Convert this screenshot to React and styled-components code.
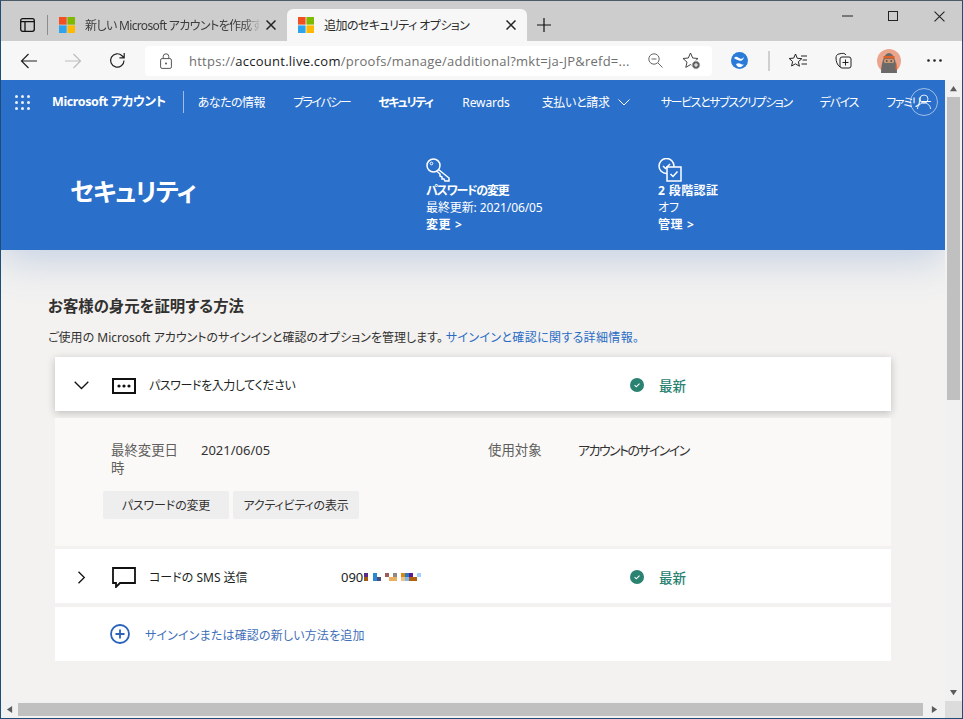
import React from 'react'
import styled, { createGlobalStyle } from 'styled-components'

const GlobalStyle = createGlobalStyle`
  html, body { margin: 0; padding: 0; height: 100%; overflow: hidden; }
  body {
    font-family: "Noto Sans", "Noto Sans CJK JP", sans-serif;
    font-feature-settings: "palt";
    color: #201f1e;
  }
  * { box-sizing: border-box; }
`

const Glyph = styled.svg`
  flex: none;
  display: block;
`

const Frame = styled.div`
  width: 963px;
  height: 719px;
  display: flex;
  flex-direction: column;
  border: 1px solid #1d4e79;
  border-top-color: #4a5a68;
  overflow: hidden;
`

const TabStrip = styled.div`
  height: 40px;
  flex: none;
  background: #cdcdcd;
  display: flex;
  align-items: flex-end;
  padding-left: 7px;
`

const TabToggle = styled.div`
  width: 40px;
  height: 20px;
  margin-bottom: 6px;
  display: flex;
  align-items: center;
  justify-content: center;
  border-right: 1px solid #8d8d8d;
`

const Tab = styled.div`
  width: ${p => p.$width}px;
  height: 32px;
  flex: none;
  display: flex;
  align-items: center;
  padding: 0 11px;
  gap: 10px;
  font-size: 12px;
  border-radius: 6px 6px 0 0;
  background: ${p => (p.$active ? '#f7f7f7' : 'transparent')};
  color: ${p => (p.$active ? '#2a2a2a' : '#3c3c3c')};
`

const TabTitle = styled.span`
  flex: 1;
  min-width: 0;
  margin-right: -5px;
  white-space: nowrap;
  overflow: hidden;
  letter-spacing: ${p => p.$track || 0}px;
  -webkit-mask-image: ${p => (p.$fade ? 'linear-gradient(90deg, #000 90%, transparent)' : 'none')};
  mask-image: ${p => (p.$fade ? 'linear-gradient(90deg, #000 90%, transparent)' : 'none')};
`

const NewTab = styled.div`
  width: 34px;
  height: 32px;
  display: flex;
  align-items: center;
  justify-content: center;
`

const WindowButtons = styled.div`
  margin-left: auto;
  align-self: flex-start;
  display: flex;
  height: 30px;
`

const WindowButton = styled.div`
  width: 46px;
  height: 30px;
  display: flex;
  align-items: center;
  justify-content: center;
`

const Toolbar = styled.div`
  height: 39px;
  flex: none;
  background: #f7f7f7;
  display: flex;
  align-items: center;
  padding-left: 6px;
`

const ToolButton = styled.div`
  width: ${p => p.$width || 44}px;
  height: 32px;
  flex: none;
  display: flex;
  align-items: center;
  justify-content: center;
`

const AddressBar = styled.div`
  width: 567px;
  height: 30px;
  flex: none;
  margin: 0 4px 0 6px;
  background: #fff;
  border-radius: 4px;
  display: flex;
  align-items: center;
  padding-left: 14px;
  font-size: 13px;
`

const Url = styled.div`
  margin-left: 16px;
  width: 448px;
  white-space: nowrap;
  letter-spacing: 0.25px;
  color: #6f6f6f;
  font-family: "Open Sans", sans-serif;
  b { font-weight: 400; color: #1a1a1a; }
`

const AddressAction = styled.div`
  width: 36px;
  height: 30px;
  display: flex;
  align-items: center;
  justify-content: center;
`

const ToolbarDivider = styled.div`
  width: 2px;
  height: 20px;
  background: #cfcfcf;
  flex: none;
  margin: 0 6px;
`

const Viewport = styled.div`
  flex: 1;
  min-height: 0;
  display: flex;
`

const Page = styled.div`
  flex: 1;
  min-width: 0;
  background: #f3f2f1;
  overflow: hidden;
`

const Banner = styled.header`
  background: #2a6fc9;
  color: #fff;
  height: 170px;
  position: relative;
  box-shadow: 0 8px 40px rgba(38, 100, 180, 0.25);
`

const Nav = styled.nav`
  height: 44px;
  display: flex;
  align-items: center;
  padding-left: 14px;
  overflow: hidden;
  white-space: nowrap;
  font-size: 12px;
`

const Brand = styled.div`
  flex: none;
  font-size: 12.5px;
  font-weight: 700;
  letter-spacing: -0.4px;
  margin-left: 22px;
  padding-right: 17px;
  height: 22px;
  line-height: 22px;
  border-right: 1px solid rgba(255, 255, 255, 0.55);
`

const NavItems = styled.div`
  flex: none;
  display: flex;
  align-items: center;
  gap: 28px;
  margin-left: 14px;
`

const NavItem = styled.span`
  display: flex;
  align-items: center;
  gap: 8px;
  flex: none;
  margin-right: ${p => p.$extra || 0}px;
  letter-spacing: ${p => p.$track || 0}px;
  font-weight: ${p => (p.$current ? 700 : 400)};
`

const UserCircle = styled.div`
  position: absolute;
  left: 909px;
  top: 8px;
  width: 28px;
  height: 28px;
  border-radius: 50%;
  border: 1px solid rgba(255, 255, 255, 0.55);
  display: flex;
  align-items: center;
  justify-content: center;
`

const Hero = styled.div`
  height: 126px;
  display: grid;
  grid-template-columns: 356px 232px 1fr;
  padding-left: 69px;
`

const HeroTitle = styled.h1`
  margin: 6px 0 0;
  align-self: center;
  font-size: 25px;
  font-weight: 700;
  letter-spacing: -1px;
`

const HeroBlock = styled.div`
  padding-top: 34px;
  font-size: 12px;
  line-height: 17px;
`

const HeroIcon = styled.div`
  height: 24px;
`

const HeroStrong = styled.div`
  font-weight: 700;
  letter-spacing: ${p => p.$track || 0}px;
`

const HeroText = styled.div`
  letter-spacing: -0.1px;
`

const Content = styled.main`
  padding: 47px 0 0 47px;
`

const Heading = styled.h2`
  margin: 0 0 10px;
  font-size: 15.4px;
  line-height: 20px;
  font-weight: 700;
  color: #323130;
`

const Intro = styled.p`
  margin: 0 0 9px;
  padding-top: 1px;
  font-size: 12px;
  line-height: 20px;
  color: #323130;
`

const InlineLink = styled.a`
  color: #2a6cc4;
  letter-spacing: 0.35px;
`

const List = styled.div`
  margin-left: 7px;
  width: 836px;
  display: flex;
  flex-direction: column;
`

const Row = styled.div`
  height: 54px;
  background: #fff;
  display: grid;
  grid-template-columns: 52px 42px 192px 289px 1fr;
  align-items: center;
  font-size: 12px;
  margin-bottom: ${p => p.$gap || 0}px;
  box-shadow: ${p => (p.$raised ? '0 2px 8px rgba(0, 0, 0, 0.22)' : 'none')};
`

const RowText = styled.span`
  margin-top: 2px;
  letter-spacing: ${p => p.$track || 0}px;
`

const Chevron = styled.div`
  display: flex;
  justify-content: center;
  margin-top: 3px;
`

const RowIcon = styled.div`
  display: flex;
  padding-left: 5px;
  margin-top: 3px;
`

const Status = styled.div`
  display: flex;
  align-items: center;
  gap: 15px;
  margin-top: 2px;
  color: #2a8271;
  font-size: 13.5px;
  font-weight: 500;
`

const Masked = styled.div`
  display: flex;
  align-items: center;
  font-size: 13px;
  margin-top: 2px;
`

const MosaicBlock = styled(Glyph)`
  margin: -1px 0 0 1px;
`

const Detail = styled.div`
  height: 128px;
  background: #faf9f8;
  margin-bottom: 3px;
  padding: 23px 0 0 48px;
  font-size: 12px;
`

const DetailGrid = styled.div`
  display: grid;
  grid-template-columns: 90px 287px 90px 1fr;
  padding-left: 8px;
  line-height: 18px;
  height: 50px;
`

const DetailLabel = styled.div`
  width: 72px;
  font-size: 13.4px;
  color: #605e5c;
`

const DetailValue = styled.div`
  color: #323130;
  font-size: 13px;
  letter-spacing: ${p => p.$track || 0}px;
`

const Actions = styled.div`
  display: flex;
  gap: 4px;
`

const ActionButton = styled.button`
  width: 126px;
  height: 28px;
  border: 0;
  padding: 0;
  background: #eeeeee;
  border-radius: 2px;
  font: inherit;
  letter-spacing: -0.15px;
  color: #323130;
`

const AddRow = styled.div`
  height: 54px;
  background: #fff;
  display: flex;
  align-items: center;
  gap: 15px;
  padding-left: 55px;
  font-size: 12px;
  color: #3f6fb8;
`

const VScroll = styled.div`
  width: 17px;
  flex: none;
  background: #f1f1f1;
  display: flex;
  flex-direction: column;
  align-items: center;
`

const ScrollEnd = styled.div`
  height: 17px;
  width: ${p => p.$width || 17}px;
  flex: none;
  display: flex;
  align-items: center;
  justify-content: center;
`

const VThumb = styled.div`
  width: 13px;
  height: 303px;
  background: #c0c0c0;
`

const VTrack = styled.div`
  flex: 1;
`

const HScroll = styled.div`
  height: 17px;
  flex: none;
  background: #f1f1f1;
  display: flex;
  align-items: center;
`

const HThumb = styled.div`
  height: 13px;
  width: 905px;
  background: #c0c0c0;
`

const Corner = styled.div`
  width: 17px;
  height: 17px;
  background: #dcdcdc;
  margin-left: auto;
`

const FlipArrow = styled(Glyph)`
  transform: ${p => (p.$flip ? 'scaleX(-1)' : 'none')};
`

const MsLogo = () => (
  <Glyph width="16" height="16" viewBox="0 0 16 16">
    <rect width="7.6" height="7.6" fill="#f25022" />
    <rect x="8.4" width="7.6" height="7.6" fill="#7fba00" />
    <rect y="8.4" width="7.6" height="7.6" fill="#2ea4ef" />
    <rect x="8.4" y="8.4" width="7.6" height="7.6" fill="#ffb900" />
  </Glyph>
)

const CloseIcon = ({ size = 10, width = 1.5, color = '#222' }) => (
  <Glyph width={size} height={size} viewBox="0 0 10 10">
    <path d="M.5.5l9 9M9.5.5l-9 9" stroke={color} strokeWidth={width} fill="none" />
  </Glyph>
)

const Arrow = ({ color, flip }) => (
  <FlipArrow $flip={flip} width="18" height="16" viewBox="0 0 18 16">
    <path d="M17 8H1.5M8.5 1L1.5 8l7 7" stroke={color} strokeWidth="1.2" fill="none" />
  </FlipArrow>
)

const Dots = () => (
  <svg width="15" height="3" viewBox="0 0 15 3">
    <circle cx="1.5" cy="1.5" r="1.3" fill="#222" />
    <circle cx="7.5" cy="1.5" r="1.3" fill="#222" />
    <circle cx="13.5" cy="1.5" r="1.3" fill="#222" />
  </svg>
)

const Waffle = () => (
  <Glyph width="15" height="15" viewBox="0 0 15 15" fill="#fff" opacity="0.9">
    {[1.5, 7.5, 13.5].map(y => [1.5, 7.5, 13.5].map(x => <circle key={`${x}-${y}`} cx={x} cy={y} r="1.5" />))}
  </Glyph>
)

const CheckBadge = () => (
  <Glyph width="14" height="14" viewBox="0 0 14 14">
    <circle cx="7" cy="7" r="7" fill="#2a8271" />
    <path d="M4.6 7.2l1.7 1.6 3.2-3.2" stroke="#fff" strokeWidth="1.1" fill="none" />
  </Glyph>
)

const Caret = ({ d }) => (
  <svg width="7" height="7" viewBox="0 0 8 8">
    <path d={d} fill="#5c5c5c" />
  </svg>
)

// モザイク処理された電話番号
const mosaic = [
  [0, 0, '#5b2a86'], [0, 4, '#a05a14'],
  [9, 0, '#2a88d0'], [9, 4, '#2a88d0'], [13, 4, '#4a4a80'],
  [21, 0, '#a05a5a'], [29, 0, '#8a8a80'], [25, 4, '#e8b060'], [29, 4, '#e8b060'],
  [37, 0, '#d88a10'], [41, 0, '#2a7ac0'], [45, 0, '#5a1a90'], [53, 0, '#a0d0ff'],
  [37, 4, '#f0c080'], [41, 4, '#80b8f0'], [45, 4, '#b06010'], [49, 4, '#b06010'],
]

const Mosaic = () => (
  <MosaicBlock width="57" height="8" viewBox="0 0 57 8">
    {mosaic.map(([x, y, c]) => <rect key={`${x}-${y}`} x={x} y={y} width="4" height="4" fill={c} />)}
  </MosaicBlock>
)

const navHead = [
  { label: 'あなたの情報', track: -0.5 },
  { label: 'プライバシー', track: -1.5 },
  { label: 'セキュリティ', track: -1.5, extra: 2, current: true },
  { label: 'Rewards', track: -0.1, extra: 4 },
]

const navTail = [
  { label: 'サービスとサブスクリプション', track: -1.4 },
  { label: 'デバイス', track: -1.25 },
  { label: 'ファミリー', track: -1.4 },
]

export default function App() {
  return (
    <>
      <GlobalStyle />
      <Frame>
        <TabStrip>
          <TabToggle>
            <svg width="15" height="14" viewBox="0 0 15 14">
              <rect x=".7" y=".7" width="13.6" height="12.6" rx="2" fill="none" stroke="#111" strokeWidth="1.3" />
              <path d="M1 3.6h13M5 3.6v9.6" stroke="#111" strokeWidth="1.3" fill="none" />
            </svg>
          </TabToggle>
          <Tab $width={239}>
            <MsLogo />
            <TabTitle $fade $track={-0.65}>新しい Microsoft アカウントを作成する</TabTitle>
            <CloseIcon />
          </Tab>
          <Tab $active $width={240}>
            <MsLogo />
            <TabTitle $track={-0.55}>追加のセキュリティ オプション</TabTitle>
            <CloseIcon />
          </Tab>
          <NewTab>
            <svg width="14" height="14" viewBox="0 0 14 14">
              <path d="M7 0v14M0 7h14" stroke="#111" strokeWidth="1.2" />
            </svg>
          </NewTab>
          <WindowButtons>
            <WindowButton>
              <svg width="11" height="2" viewBox="0 0 11 2"><path d="M0 1h11" stroke="#222" /></svg>
            </WindowButton>
            <WindowButton>
              <svg width="10" height="10" viewBox="0 0 10 10"><rect x=".5" y=".5" width="9" height="9" fill="none" stroke="#222" /></svg>
            </WindowButton>
            <WindowButton>
              <CloseIcon size={11} width={1} />
            </WindowButton>
          </WindowButtons>
        </TabStrip>

        <Toolbar>
          <ToolButton><Arrow color="#222" /></ToolButton>
          <ToolButton><Arrow color="#bdbdbd" flip /></ToolButton>
          <ToolButton>
            <svg width="17" height="17" viewBox="0 0 17 17">
              <path d="M15 8.5a6.7 6.7 0 1 1-2-4.8L15 5.6M15.2 1v4.8h-4.8" stroke="#222" strokeWidth="1.2" fill="none" />
            </svg>
          </ToolButton>
          <AddressBar>
            <svg width="14" height="16" viewBox="0 0 14 16">
              <rect x="1.6" y="5.6" width="10.8" height="9.8" rx="1.5" fill="none" stroke="#555" />
              <path d="M4.2 5.6V3.6a2.8 2.8 0 0 1 5.6 0v2" fill="none" stroke="#555" />
              <circle cx="7" cy="10.5" r="1" fill="#555" />
            </svg>
            <Url>https://<b>account.live.com</b>/proofs/manage/additional?mkt=ja-JP&amp;refd=...</Url>
            <AddressAction>
              <svg width="15" height="15" viewBox="0 0 15 15">
                <circle cx="6" cy="6" r="5.2" fill="none" stroke="#666" />
                <path d="M3.5 6h5M10 10l4.5 4.5" stroke="#666" fill="none" />
              </svg>
            </AddressAction>
            <AddressAction>
              <svg width="19" height="18" viewBox="0 0 19 18">
                <path d="M8.5 1l2.2 5 5.3.5-4 3.6 1.2 5.3-4.7-2.8-4.7 2.8 1.2-5.3-4-3.6 5.3-.5z" fill="none" stroke="#444" strokeWidth="1" />
                <circle cx="14" cy="13" r="4.2" fill="#5f5f5f" stroke="#fff" />
                <path d="M14 11v4M12 13h4" stroke="#fff" />
              </svg>
            </AddressAction>
          </AddressBar>
          <ToolButton $width={46}>
            <svg width="17" height="17" viewBox="0 0 17 17">
              <circle cx="8.5" cy="8.5" r="8.5" fill="#2a7ad8" />
              <path d="M3 6c2-2.5 4-1 5 0s3 1.5 5-1c-.5 3-2.5 4.5-5 3.5-2-.8-3-1-5-2.5zM5 12c2-1 3.5-1 5 0s2 1 3 0c-1 2.5-3.5 3.5-5.5 3-1-.3-2-1.5-2.5-3z" fill="#fff" />
            </svg>
          </ToolButton>
          <ToolbarDivider />
          <ToolButton $width={44}>
            <svg width="18" height="16" viewBox="0 0 18 16">
              <path d="M6.5 1l1.8 4.3 4.5.4-3.4 3 1 4.5-3.9-2.4L2.6 13l1-4.5-3.4-3 4.5-.4z" fill="none" stroke="#222" />
              <path d="M12 3h6M13.5 7H18M12.5 11H18" stroke="#222" />
            </svg>
          </ToolButton>
          <ToolButton $width={47}>
            <svg width="17" height="17" viewBox="0 0 17 17">
              <path d="M5 15C2 13 1 9 1 6c0-2 1-4 3-4 3-1 6-1 7 1" fill="none" stroke="#222" />
              <rect x="5" y="5" width="11" height="11" rx="2" fill="#f7f7f7" stroke="#222" />
              <path d="M10.5 7.5v6M7.5 10.5h6" stroke="#222" />
            </svg>
          </ToolButton>
          <ToolButton $width={44}>
            <svg width="24" height="24" viewBox="0 0 24 24">
              <circle cx="12" cy="12" r="12" fill="#eba58c" />
              <path d="M4 24c0-9 3-20 8-20s8 11 8 20z" fill="#6c6a68" />
              <rect x="6.5" y="7" width="11" height="2.5" fill="#d9622c" />
              <rect x="7" y="10" width="10" height="4" rx="1.5" fill="#c69a78" />
              <circle cx="9.8" cy="12" r=".8" fill="#222" />
              <circle cx="14.2" cy="12" r=".8" fill="#222" />
              <path d="M19 13l1.5 6-2 2z" fill="#e8692e" />
            </svg>
          </ToolButton>
          <ToolButton $width={47}><Dots /></ToolButton>
        </Toolbar>

        <Viewport>
          <Page>
            <Banner>
              <Nav>
                <Waffle />
                <Brand>Microsoft アカウント</Brand>
                <NavItems>
                  {navHead.map(item => (
                    <NavItem key={item.label} $track={item.track} $extra={item.extra} $current={item.current}>{item.label}</NavItem>
                  ))}
                  <NavItem $track={-0.3} $extra={3}>
                    支払いと請求
                    <svg width="12" height="7" viewBox="0 0 12 7">
                      <path d="M.5.5L6 6 11.5.5" stroke="#fff" fill="none" />
                    </svg>
                  </NavItem>
                  {navTail.map(item => (
                    <NavItem key={item.label} $track={item.track}>{item.label}</NavItem>
                  ))}
                </NavItems>
              </Nav>
              <UserCircle>
                <svg width="16" height="16" viewBox="0 0 16 16">
                  <circle cx="8" cy="5" r="4" fill="none" stroke="#fff" strokeOpacity=".85" />
                  <path d="M1.5 15c0-3 2.5-6 6.5-6s6.5 3 6.5 6" fill="none" stroke="#fff" strokeOpacity=".85" />
                </svg>
              </UserCircle>
              <Hero>
                <HeroTitle>セキュリティ</HeroTitle>
                <HeroBlock>
                  <HeroIcon>
                    <svg width="24" height="24" viewBox="0 0 24 24">
                      <circle cx="7.5" cy="7.5" r="6.5" fill="none" stroke="#fff" strokeWidth="1.5" />
                      <circle cx="5.5" cy="5.5" r="1.3" fill="none" stroke="#fff" />
                      <path d="M12.5 11.5L23 20v3h-4l-1-2h-2v-2l-2-1v-2l-2.8-2.5" fill="none" stroke="#fff" strokeWidth="1.5" />
                    </svg>
                  </HeroIcon>
                  <HeroStrong $track={-1.25}>パスワードの変更</HeroStrong>
                  <HeroText>最終更新: 2021/06/05</HeroText>
                  <HeroStrong $track={0.6}>変更 &gt;</HeroStrong>
                </HeroBlock>
                <HeroBlock>
                  <HeroIcon>
                    <svg width="24" height="24" viewBox="0 0 24 24">
                      <circle cx="8.5" cy="8" r="7.5" fill="none" stroke="#fff" strokeWidth="1.5" />
                      <path d="M5 8l2.5 2.5L12 6" fill="none" stroke="#fff" strokeWidth="1.5" />
                      <rect x="9" y="9" width="14" height="14" fill="#2a6fc9" stroke="#fff" strokeWidth="1.5" />
                      <path d="M12.5 16l2.5 2.5 4.5-5" fill="none" stroke="#fff" strokeWidth="1.5" />
                    </svg>
                  </HeroIcon>
                  <HeroStrong $track={0.4}>2 段階認証</HeroStrong>
                  <HeroText>オフ</HeroText>
                  <HeroStrong $track={0.6}>管理 &gt;</HeroStrong>
                </HeroBlock>
              </Hero>
            </Banner>

            <Content>
              <Heading>お客様の身元を証明する方法</Heading>
              <Intro>
                ご使用の Microsoft アカウントのサインインと確認のオプションを管理します。{' '}
                <InlineLink>サインインと確認に関する詳細情報。</InlineLink>
              </Intro>
              <List>
                <Row $raised $gap={7}>
                  <Chevron>
                    <svg width="15" height="9" viewBox="0 0 15 9">
                      <path d="M.7.7l6.8 6.8L14.3.7" fill="none" stroke="#111" strokeWidth="1.3" />
                    </svg>
                  </Chevron>
                  <RowIcon>
                    <svg width="24" height="16" viewBox="0 0 24 16">
                      <rect x="1" y="1" width="22" height="14" fill="#fff" stroke="#111" strokeWidth="2" />
                      <circle cx="7" cy="8" r="1.6" fill="#111" />
                      <circle cx="12" cy="8" r="1.6" fill="#111" />
                      <circle cx="17" cy="8" r="1.6" fill="#111" />
                    </svg>
                  </RowIcon>
                  <RowText $track={-0.4}>パスワードを入力してください</RowText>
                  <span />
                  <Status><CheckBadge />最新</Status>
                </Row>
                <Detail>
                  <DetailGrid>
                    <DetailLabel>最終変更日時</DetailLabel>
                    <DetailValue>2021/06/05</DetailValue>
                    <DetailLabel>使用対象</DetailLabel>
                    <DetailValue $track={-1.6}>アカウントのサインイン</DetailValue>
                  </DetailGrid>
                  <Actions>
                    <ActionButton>パスワードの変更</ActionButton>
                    <ActionButton>アクティビティの表示</ActionButton>
                  </Actions>
                </Detail>
                <Row $gap={4}>
                  <Chevron>
                    <svg width="9" height="13" viewBox="0 0 9 13">
                      <path d="M1.5.7l5.8 5.8-5.8 5.8" fill="none" stroke="#111" strokeWidth="1.3" />
                    </svg>
                  </Chevron>
                  <RowIcon>
                    <svg width="24" height="21" viewBox="0 0 24 21">
                      <path d="M1 1h22v15H8l-4 4v-4H1z" fill="#fff" stroke="#111" strokeWidth="1.8" />
                    </svg>
                  </RowIcon>
                  <RowText>コードの SMS 送信</RowText>
                  <Masked>090<Mosaic /></Masked>
                  <Status><CheckBadge />最新</Status>
                </Row>
                <AddRow>
                  <svg width="20" height="20" viewBox="0 0 20 20">
                    <circle cx="10" cy="10" r="9" fill="none" stroke="#2a62b8" strokeWidth="1.8" />
                    <path d="M10 5.5v9M5.5 10h9" stroke="#2a62b8" strokeWidth="1.8" />
                  </svg>
                  <RowText $track={0.17}>サインインまたは確認の新しい方法を追加</RowText>
                </AddRow>
              </List>
            </Content>
          </Page>
          <VScroll>
            <ScrollEnd><Caret d="M4 1l4 6H0z" /></ScrollEnd>
            <VThumb />
            <VTrack />
            <ScrollEnd><Caret d="M0 1h8L4 7z" /></ScrollEnd>
          </VScroll>
        </Viewport>
        <HScroll>
          <ScrollEnd><Caret d="M7 0v8L1 4z" /></ScrollEnd>
          <HThumb />
          <ScrollEnd $width={22}><Caret d="M1 0v8l6-4z" /></ScrollEnd>
          <Corner />
        </HScroll>
      </Frame>
    </>
  )
}
